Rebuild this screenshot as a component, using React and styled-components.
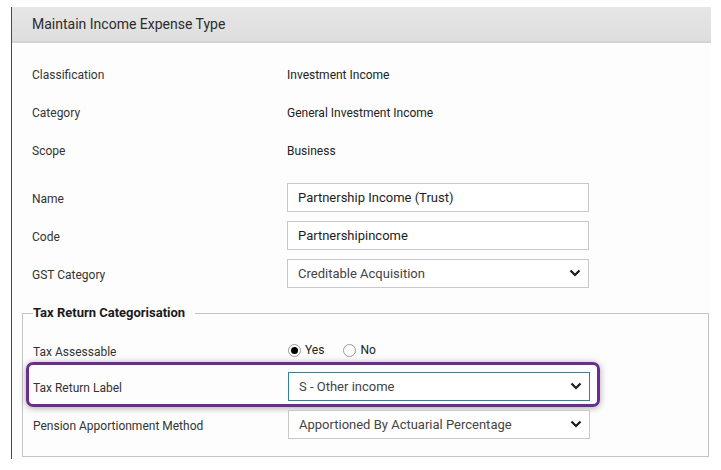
import React from "react";
import styled, { createGlobalStyle } from "styled-components";

const Global = createGlobalStyle`
  body {
    margin: 0;
    background: #fff;
    font-family: Roboto, "Liberation Sans", sans-serif;
  }
`;

const Page = styled.div`
  padding: 7px 10px 0 11px;
`;

const Panel = styled.div`
  border-left: 1px solid #4a4a4a;
  background: #fdfdfd;
  padding-bottom: 2px;
`;

const Header = styled.div`
  height: 34px;
  display: flex;
  align-items: center;
  padding-left: 20px;
  background: linear-gradient(#e6e6e6, #dedede);
  border-bottom: 2px solid #d3d3d3;
  font-size: 14px;
  color: #2b2b2b;
`;

const Body = styled.div`
  padding: 12px 0 0 20px;
`;

const Row = styled.div`
  position: relative;
  display: grid;
  grid-template-columns: 255px 302px;
  align-items: center;
  height: ${(p) => p.$h || 38}px;
  margin-top: ${(p) => p.$mt || 0}px;
`;

const Label = styled.div`
  font-size: 12px;
  color: #333;
  margin-top: ${(p) => (p.$static ? 2 : 4)}px;
`;

const Value = styled.div`
  font-size: 12px;
  color: #222;
  margin-top: 1px;
`;

const Field = styled.div`
  box-sizing: border-box;
  height: 29px;
  display: flex;
  align-items: center;
  justify-content: space-between;
  padding: 0 7px 0 10px;
  background: #fff;
  border: 1px solid ${(p) => (p.$focus ? "#2f8494" : "#c8c8c8")};
  font-size: 13px;
  color: ${(p) => (p.$muted ? "#444" : "#1e1e1e")};
`;

const Highlight = styled.div`
  position: absolute;
  left: -7px;
  top: -5px;
  width: 574px;
  height: 45px;
  box-sizing: border-box;
  border: 3px solid #6b2c8f;
  border-radius: 7px;
  box-shadow: 0 1px 7px rgba(0, 0, 0, 0.35);
  pointer-events: none;
`;

const Group = styled.fieldset`
  margin: 13px 2px 0 -10px;
  padding: 0 10px 13px 10px;
  border: 1px solid #c4c4c4;
  min-width: 0;
`;

const Legend = styled.legend`
  padding: 0 10px 0 0;
  font-size: 13px;
  font-weight: bold;
  line-height: 16px;
  color: #1a1a1a;
`;

const Radios = styled.div`
  display: flex;
  align-items: center;
  gap: 19px;
  font-size: 12px;
  color: #222;
`;

const RadioItem = styled.label`
  display: flex;
  align-items: center;
  gap: 4px;
`;

const Dot = styled.span`
  box-sizing: border-box;
  width: 13px;
  height: 13px;
  border-radius: 50%;
  border: 1px solid #9a9a9a;
  background: #fff;
  display: flex;
  align-items: center;
  justify-content: center;
  &::after {
    content: "";
    width: 7px;
    height: 7px;
    border-radius: 50%;
    background: ${(p) => (p.$on ? "#000" : "transparent")};
  }
`;

const Chevron = () => (
  <svg width="12" height="8" viewBox="0 0 12 8">
    <path d="M1.5 1.5 L6 6 L10.5 1.5" fill="none" stroke="#1a1a1a" strokeWidth="2.2" />
  </svg>
);

const Select = ({ children, $focus }) => (
  <Field $muted $focus={$focus}>
    <span>{children}</span>
    <Chevron />
  </Field>
);

export default function App() {
  return (
    <>
      <Global />
      <Page>
        <Panel>
          <Header>Maintain Income Expense Type</Header>
          <Body>
            <Row>
              <Label $static>Classification</Label>
              <Value>Investment Income</Value>
            </Row>
            <Row>
              <Label $static>Category</Label>
              <Value>General Investment Income</Value>
            </Row>
            <Row>
              <Label $static>Scope</Label>
              <Value>Business</Value>
            </Row>
            <Row $mt={9}>
              <Label>Name</Label>
              <Field>Partnership Income (Trust)</Field>
            </Row>
            <Row>
              <Label>Code</Label>
              <Field>Partnershipincome</Field>
            </Row>
            <Row>
              <Label>GST Category</Label>
              <Select>Creditable Acquisition</Select>
            </Row>
            <Group>
              <Legend>Tax Return Categorisation</Legend>
              <Row $h={34} $mt={12}>
                <Label>Tax Assessable</Label>
                <Radios>
                  <RadioItem>
                    <Dot $on />
                    Yes
                  </RadioItem>
                  <RadioItem>
                    <Dot />
                    No
                  </RadioItem>
                </Radios>
              </Row>
              <Row>
                <Label>Tax Return Label</Label>
                <Select $focus>S - Other income</Select>
                <Highlight />
              </Row>
              <Row>
                <Label>Pension Apportionment Method</Label>
                <Select>Apportioned By Actuarial Percentage</Select>
              </Row>
            </Group>
          </Body>
        </Panel>
      </Page>
    </>
  );
}
